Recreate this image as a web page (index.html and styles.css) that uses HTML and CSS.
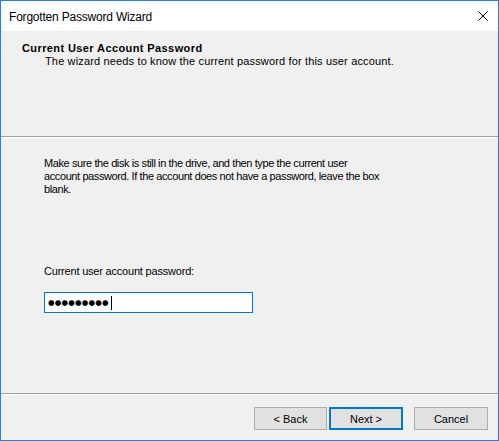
FILE: index.html
```html
<!DOCTYPE html>
<html lang="en">
<head>
<meta charset="utf-8">
<title>Forgotten Password Wizard</title>
<link rel="stylesheet" href="styles.css">
</head>
<body>
<div class="window">
  <div class="titlebar">
    <span class="title">Forgotten Password Wizard</span>
    <span class="close" aria-label="Close">
      <svg width="10" height="10" viewBox="0 0 10 10"><path d="M0.5 0.5 L9.5 9.5 M9.5 0.5 L0.5 9.5" stroke="#000" stroke-width="1" fill="none"/></svg>
    </span>
  </div>
  <div class="header">
    <div class="header-title">Current User Account Password</div>
    <div class="header-sub">The wizard needs to know the current password for this user account.</div>
  </div>
  <div class="sep"></div>
  <div class="content">
    <p class="desc">Make sure the disk is still in the drive, and then type the current user<br>account password. If the account does not have a password, leave the box<br>blank.</p>
    <div class="label">Current user account password:</div>
    <div class="textbox"><span class="dots">●●●●●●●●●</span><span class="caret"></span></div>
  </div>
  <div class="sep"></div>
  <div class="footer">
    <button class="btn back">&lt; Back</button>
    <button class="btn next">Next &gt;</button>
    <button class="btn cancel">Cancel</button>
  </div>
</div>
</body>
</html>
```
FILE: styles.css
```css
html, body {
  margin: 0;
  padding: 0;
  background: #f0f0f0;
}
.window {
  width: 499px;
  height: 441px;
  box-sizing: border-box;
  border: 1px solid #2b80d6;
  background: #f0f0f0;
  display: flex;
  flex-direction: column;
  font-family: "Liberation Sans", Arial, sans-serif;
  font-size: 11px;
  line-height: 13px;
  color: #000;
}
.titlebar {
  height: 30px;
  flex: none;
  background: #fff;
  display: flex;
  align-items: center;
  justify-content: space-between;
  padding: 0 10px 0 8px;
}
.title {
  font-size: 12px;
  line-height: 16px;
  letter-spacing: -0.2px;
  margin-top: 1px;
}
.close {
  display: flex;
}
.header {
  height: 105px;
  flex: none;
  box-sizing: border-box;
  padding: 11px 0 0 21px;
}
.header-title {
  font-weight: bold;
  letter-spacing: 0.4px;
}
.header-sub {
  padding-left: 23px;
  letter-spacing: 0.15px;
}
.sep {
  height: 1px;
  flex: none;
  background: #a0a0a0;
  border-bottom: 1px solid #fff;
}
.content {
  height: 255px;
  flex: none;
  box-sizing: border-box;
  padding: 19px 0 0 43px;
}
.desc {
  margin: 0;
  white-space: nowrap;
  letter-spacing: -0.4px;
}
.label {
  margin-top: 69px;
  letter-spacing: -0.2px;
}
.textbox {
  margin-top: 14px;
  width: 209px;
  height: 21px;
  box-sizing: border-box;
  border: 1px solid #0078d7;
  background: #fff;
  display: flex;
  align-items: center;
  padding-left: 3px;
}
.dots {
  font-family: "DejaVu Sans", sans-serif;
  font-size: 7.5px;
  letter-spacing: 0.2px;
  line-height: 10px;
}
.caret {
  width: 1px;
  height: 14px;
  background: #000;
  margin-left: 2px;
}
.footer {
  flex: 1;
  display: flex;
  justify-content: flex-end;
  align-items: flex-start;
  padding: 12px 10px 0 0;
}
.btn {
  width: 74px;
  height: 23px;
  box-sizing: border-box;
  border: 1px solid #adadad;
  background: #e1e1e1;
  font-family: "Liberation Sans", Arial, sans-serif;
  font-size: 11px;
  color: #000;
  padding: 0;
  margin: 0;
}
.back {
  width: 73px;
}
.next {
  margin-left: 2px;
  border: 2px solid #0078d7;
}
.cancel {
  margin-left: 11px;
}
```
